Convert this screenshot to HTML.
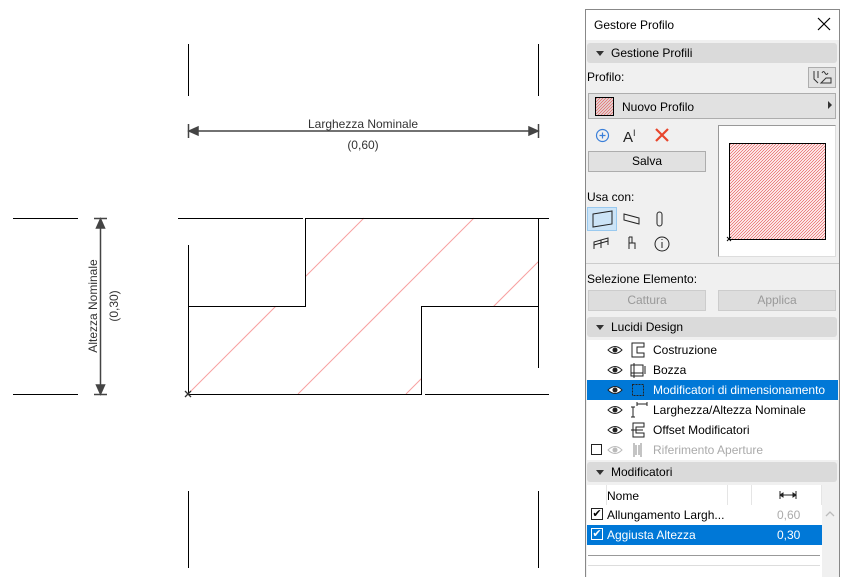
<!DOCTYPE html>
<html><head><meta charset="utf-8"><style>
*{margin:0;padding:0;box-sizing:border-box}
body{width:848px;height:577px;background:#fff;position:relative;overflow:hidden;font-family:"Liberation Sans",sans-serif;font-size:12px;color:#000}
.a{position:absolute}
.hdr{position:absolute;left:587px;width:250px;height:20px;background:#dadada;border-radius:3px}
.hdr span{position:absolute;left:24px;top:3px}
.hdr i{position:absolute;left:9px;top:8px;border-left:4px solid transparent;border-right:4px solid transparent;border-top:5px solid #333}
.btn{position:absolute;background:#e1e1e1;border:1px solid #adadad;text-align:center;line-height:19px}
.row{position:absolute;left:587px;width:251px;height:20px}
.row span{position:absolute;left:66px;top:3px}
.eye{position:absolute;left:20px;top:5px}
.ic{position:absolute;left:43px;top:2px}
</style></head><body>
<svg class="a" style="left:0;top:0" width="584" height="577">
<g stroke="#000" stroke-width="1" fill="none">
<line x1="188.5" y1="44" x2="188.5" y2="96"/><line x1="538.5" y1="44" x2="538.5" y2="96"/>
<line x1="188.5" y1="491" x2="188.5" y2="568"/><line x1="538.5" y1="491" x2="538.5" y2="568"/>
</g>
<g stroke="#444" stroke-width="1.5" fill="#444">
<line x1="188" y1="131" x2="538" y2="131"/>
<line x1="188.5" y1="124" x2="188.5" y2="138"/><line x1="538.5" y1="124" x2="538.5" y2="138"/>
<path d="M189 131 l9 -4 v8z M538 131 l-9 -4 v8z"/>
<line x1="100.5" y1="218" x2="100.5" y2="394"/>
<line x1="94" y1="218.5" x2="107" y2="218.5"/><line x1="94" y1="394.5" x2="107" y2="394.5"/>
<path d="M100.5 219 l-4 9 h8z M100.5 394 l-4 -9 h8z"/>
</g>
<text x="363" y="128" font-size="12" fill="#333" text-anchor="middle" font-family="Liberation Sans">Larghezza Nominale</text>
<text x="363" y="149" font-size="12" fill="#333" text-anchor="middle" font-family="Liberation Sans">(0,60)</text>
<text transform="translate(97,306) rotate(-90)" font-size="12" fill="#333" text-anchor="middle" font-family="Liberation Sans">Altezza Nominale</text>
<text transform="translate(118,306) rotate(-90)" font-size="12" fill="#333" text-anchor="middle" font-family="Liberation Sans">(0,30)</text>
<g stroke="#f7a0a0" stroke-width="1">
<line x1="188" y1="394" x2="364" y2="218"/>
<line x1="298" y1="394" x2="474" y2="218"/>
<line x1="406" y1="394" x2="582" y2="218"/>
</g>
<rect x="189" y="219" width="116" height="87" fill="#fff"/>
<rect x="422" y="307" width="116" height="87" fill="#fff"/>
<rect x="539" y="200" width="45" height="200" fill="#fff"/>
<g stroke="#000" stroke-width="1" fill="none">
<line x1="13" y1="218.5" x2="78" y2="218.5"/><line x1="13" y1="394.5" x2="78" y2="394.5"/>
<line x1="178" y1="218.5" x2="303" y2="218.5"/>
<path d="M305.5 306.5 V218.5 H549"/>
<line x1="188.5" y1="245" x2="188.5" y2="394"/>
<line x1="188" y1="306.5" x2="306" y2="306.5"/>
<line x1="538.5" y1="218" x2="538.5" y2="368"/>
<path d="M188 394.5 H421.5 V306.5 H538.5"/>
<line x1="425" y1="394.5" x2="549" y2="394.5"/>
</g>
<path d="M185 391 l6 6 M191 391 l-6 6" stroke="#333" stroke-width="1.3"/>
</svg>

<div class="a" style="left:585px;top:9px;width:255px;height:568px;background:#f0f0f0;border-left:1px solid #888;border-top:1px solid #888;border-right:1px solid #888"></div>
<div class="a" style="left:586px;top:10px;width:253px;height:30px;background:#fff"></div>
<div class="a" style="left:594px;top:18px;font-size:12px">Gestore Profilo</div>
<svg class="a" style="left:817px;top:17px" width="14" height="14"><path d="M1 1L13 13M13 1L1 13" stroke="#000" stroke-width="1.2"/></svg>

<div class="hdr" style="top:43px"><i></i><span>Gestione Profili</span></div>
<div class="a" style="left:587px;top:70px">Profilo:</div>
<div class="btn" style="left:808px;top:67px;width:28px;height:21px"><svg width="22" height="16" style="margin-top:1px"><path d="M3 2v8l4 4 M7 2v7 M11 4c1-2 2-2 3 0c1 2 2 2 3 0 M10 14l5-5h5v5z" stroke="#333" fill="none"/></svg></div>
<div class="btn" style="left:588px;top:93px;width:248px;height:26px;text-align:left"></div>
<svg class="a" style="left:595px;top:97px" width="20" height="20"><defs><pattern id="h" width="3" height="3" patternUnits="userSpaceOnUse"><path d="M-1 1L1 -1M0 3L3 0M2 4L4 2" stroke="#e86a6a" stroke-width="0.8"/></pattern></defs><rect x=".5" y=".5" width="18" height="18" fill="url(#h)" stroke="#000"/></svg>
<div class="a" style="left:622px;top:100px">Nuovo Profilo</div>
<div class="a" style="left:828px;top:101px;border-top:4px solid transparent;border-bottom:4px solid transparent;border-left:4px solid #333"></div>

<svg class="a" style="left:595px;top:128px" width="16" height="16"><circle cx="7.5" cy="7.5" r="6" stroke="#3a7fd9" fill="none" stroke-width="1.2"/><path d="M7.5 4.5v6M4.5 7.5h6" stroke="#3a7fd9" stroke-width="1.2"/></svg>
<div class="a" style="left:623px;top:128px;font-size:15px;color:#222">A<sup style="font-size:9px">I</sup></div>
<svg class="a" style="left:655px;top:128px" width="14" height="14"><path d="M1 1L13 13M13 1L1 13" stroke="#e8452c" stroke-width="2.2"/></svg>
<div class="btn" style="left:588px;top:151px;width:118px;height:21px">Salva</div>

<div class="a" style="left:718px;top:125px;width:118px;height:132px;background:#fff;border:1px solid #999;border-right-color:#ddd;border-bottom-color:#ddd"></div>
<svg class="a" style="left:726px;top:140px" width="104" height="104"><rect x="3.5" y="3.5" width="96" height="96" fill="url(#h)" stroke="#000"/><path d="M1 97l4 4M5 97l-4 4" stroke="#000"/></svg>

<div class="a" style="left:587px;top:190px">Usa con:</div>
<div class="a" style="left:587px;top:207px;width:30px;height:24px;background:#cce4f7;border:1px solid #99c9ef"></div>
<svg class="a" style="left:587px;top:207px" width="90" height="50"><g stroke="#222" fill="none" stroke-width="1"><path d="M6 7l19-3v13l-19 3z"/><path d="M37 7l15 4v6l-15-4z"/><rect x="70" y="5" width="5" height="14" rx="2.5"/><path d="M7 42v-7l14-4v7 M7 38l14-4 M14 33v8"/><path d="M42 30v12 M42 36h6v6 M42 30h3v6"/><circle cx="75" cy="37" r="7"/><path d="M75 35v6 M75 32v1"/></g></svg>

<div class="a" style="left:586px;top:263px;width:253px;height:1px;background:#ccc"></div>
<div class="a" style="left:587px;top:272px">Selezione Elemento:</div>
<div class="btn" style="left:588px;top:290px;width:118px;height:21px;color:#999;border-color:#ccc;background:#ddd">Cattura</div>
<div class="btn" style="left:718px;top:290px;width:118px;height:21px;color:#999;border-color:#ccc;background:#ddd">Applica</div>

<div class="hdr" style="top:317px"><i></i><span>Lucidi Design</span></div>
<div class="a" style="left:587px;top:340px;width:251px;height:120px;background:#fff"></div>
<div class="row" style="top:340px"><svg class="eye" width="16" height="10"><path d="M1 5Q8-2 15 5Q8 12 1 5z" fill="none" stroke="#222"/><circle cx="8" cy="5" r="2.5" fill="#222"/></svg><svg class="ic" width="16" height="16"><path d="M2 1h12v4H7v6h7v4H2z" fill="none" stroke="#222"/></svg><span>Costruzione</span></div>
<div class="row" style="top:360px"><svg class="eye" width="16" height="10"><path d="M1 5Q8-2 15 5Q8 12 1 5z" fill="none" stroke="#222"/><circle cx="8" cy="5" r="2.5" fill="#222"/></svg><svg class="ic" width="16" height="16"><path d="M1 3h12v11H1z M4 1v15 M1 11h12 M15 4v8" fill="none" stroke="#222"/></svg><span>Bozza</span></div>
<div class="row" style="top:380px;background:#0078d7;color:#fff"><svg class="eye" width="16" height="10"><path d="M1 5Q8-2 15 5Q8 12 1 5z" fill="#fff" stroke="#222"/><circle cx="8" cy="5" r="2.5" fill="#222"/></svg><svg class="ic" width="16" height="16"><rect x="2.5" y="2.5" width="11" height="11" fill="none" stroke="#222" stroke-dasharray="2 1"/></svg><span>Modificatori di dimensionamento</span></div>
<div class="row" style="top:400px"><svg class="eye" width="16" height="10"><path d="M1 5Q8-2 15 5Q8 12 1 5z" fill="none" stroke="#222"/><circle cx="8" cy="5" r="2.5" fill="#222"/></svg><svg class="ic" width="18" height="16"><path d="M3 5v10 M1 5h4 M1 15h4 M7 2h10 M7 0v4 M17 0v4" fill="none" stroke="#222"/></svg><span>Larghezza/Altezza Nominale</span></div>
<div class="row" style="top:420px"><svg class="eye" width="16" height="10"><path d="M1 5Q8-2 15 5Q8 12 1 5z" fill="none" stroke="#222"/><circle cx="8" cy="5" r="2.5" fill="#222"/></svg><svg class="ic" width="16" height="16"><path d="M3 1h11v4H6v6h8v4H3z M1 8h12" fill="none" stroke="#222"/></svg><span>Offset Modificatori</span></div>
<div class="row" style="top:440px;color:#aaa"><div class="a" style="left:4px;top:4px;width:11px;height:11px;border:1px solid #222;background:#fff"></div><svg class="eye" width="16" height="10"><path d="M1 5Q8-2 15 5Q8 12 1 5z" fill="none" stroke="#bbb"/><circle cx="8" cy="5" r="2.5" fill="#bbb"/></svg><svg class="ic" width="16" height="16"><path d="M4 1v14 M11 1v14 M6 3v10 M9 3v10" fill="none" stroke="#888"/></svg><span>Riferimento Aperture</span></div>

<div class="hdr" style="top:462px"><i></i><span>Modificatori</span></div>
<div class="a" style="left:587px;top:485px;width:235px;height:20px;background:#fff"></div>
<div class="a" style="left:606px;top:485px;width:1px;height:20px;background:#e5e5e5"></div>
<div class="a" style="left:727px;top:485px;width:1px;height:20px;background:#e5e5e5"></div>
<div class="a" style="left:751px;top:485px;width:1px;height:20px;background:#e5e5e5"></div>
<div class="a" style="left:821px;top:485px;width:1px;height:20px;background:#e5e5e5"></div>
<div class="a" style="left:607px;top:489px">Nome</div>
<svg class="a" style="left:779px;top:491px" width="18" height="8"><path d="M1 0v8M17 0v8M1 4h16M1 4l3-2v4zM17 4l-3-2v4z" stroke="#222" fill="#222"/></svg>
<div class="a" style="left:587px;top:505px;width:235px;height:20px;background:#fff"></div>
<div class="a" style="left:591px;top:508px;width:12px;height:12px;border:1px solid #222;background:#fff;font-size:11px;line-height:10px;text-align:center">✔</div>
<div class="a" style="left:607px;top:508px">Allungamento Largh...</div>
<div class="a" style="left:777px;top:508px;color:#aaa">0,60</div>
<div class="a" style="left:587px;top:525px;width:235px;height:20px;background:#0078d7"></div>
<div class="a" style="left:591px;top:528px;width:12px;height:12px;border:1px solid #fff;background:#0078d7;color:#fff;font-size:11px;line-height:10px;text-align:center">✔</div>
<div class="a" style="left:607px;top:528px;color:#fff">Aggiusta Altezza</div>
<div class="a" style="left:777px;top:528px;color:#fff">0,30</div>
<div class="a" style="left:587px;top:545px;width:235px;height:32px;background:#fff"></div>
<div class="a" style="left:588px;top:555px;width:232px;height:1px;background:#999"></div>
<div class="a" style="left:588px;top:565px;width:232px;height:1px;background:#ddd"></div>
<div class="a" style="left:822px;top:505px;width:16px;height:72px;background:#f0f0f0"></div>
<svg class="a" style="left:825px;top:510px" width="10" height="7"><path d="M1 6l4-4 4 4" stroke="#bbb" fill="none" stroke-width="1.3"/></svg>
</body></html>
